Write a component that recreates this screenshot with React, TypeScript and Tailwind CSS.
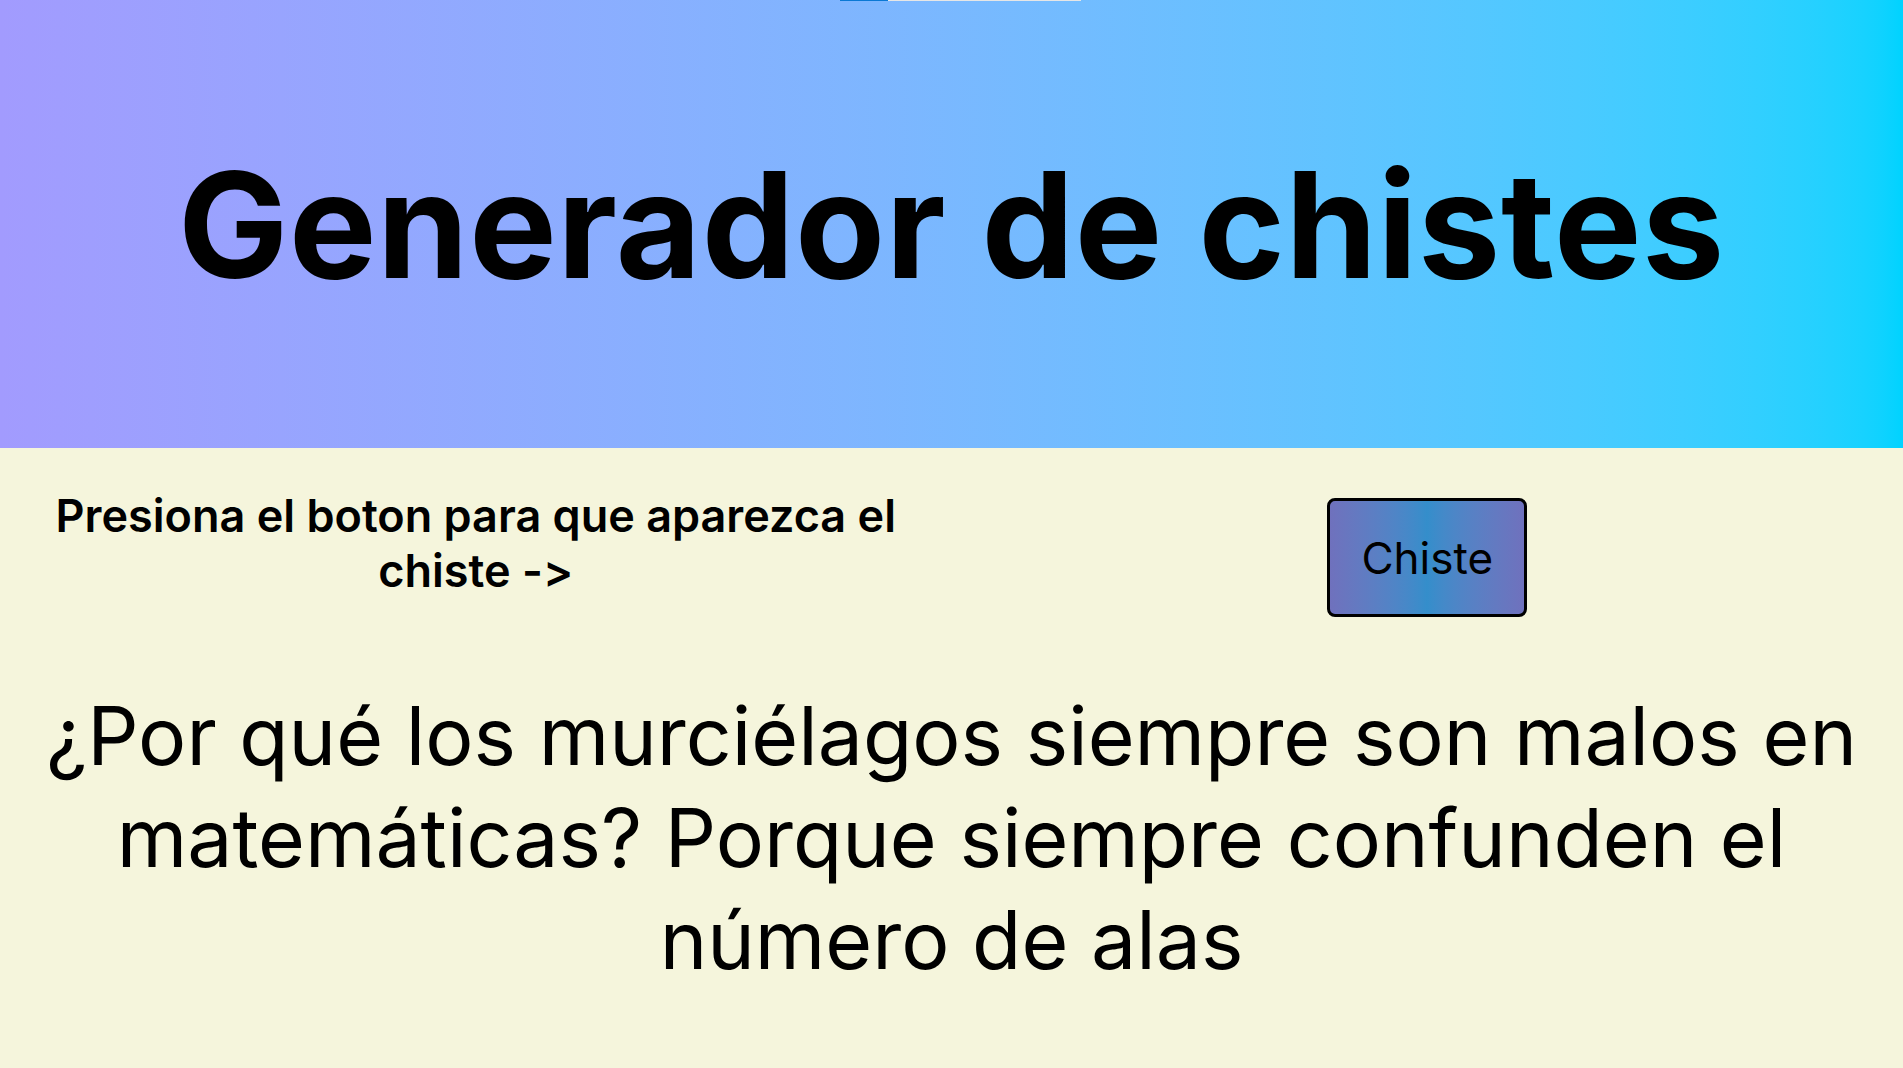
import { useState } from "react";

const JOKE =
  "¿Por qué los murciélagos siempre son malos en matemáticas? Porque siempre confunden el número de alas";

export default function App() {
  const [joke, setJoke] = useState<string>(JOKE);

  return (
    <div className="relative min-h-screen w-full bg-[#f5f5dc] text-black font-['Inter',_'Liberation_Sans',_sans-serif] [font-feature-settings:'calt'_0]">
      {/* thin loading strip at the very top */}
      <div className="absolute left-[840px] top-0 flex h-px w-[241px]">
        <div className="h-full w-[48px] bg-[#0a78d4]" />
        <div className="h-full flex-1 bg-[#e6e6e6]" />
      </div>

      <header className="flex h-[448px] w-full items-center justify-center bg-gradient-to-r from-[#a29bfe] to-[#00d3ff]">
        <h1 className="text-[147px] font-bold leading-none tracking-[0.004em]">
          Generador de chistes
        </h1>
      </header>

      <main className="flex flex-col items-center">
        <div className="grid w-full grid-cols-2 pt-[40px]">
          <p className="px-8 text-center text-[45px] font-semibold leading-[55px]">
            Presiona el boton para que aparezca el chiste -&gt;
          </p>
          <div className="flex justify-center pt-[10px]">
            <button
              onClick={() => setJoke(JOKE)}
              className="h-[119px] w-[200px] rounded-lg border-[3px] border-black bg-gradient-to-r from-[#6f71bd] via-[#348ecb] to-[#6f71bd] text-[44px] font-normal"
            >
              Chiste
            </button>
          </div>
        </div>

        <p className="mt-[68px] px-[20px] text-center text-[80.5px] font-normal leading-[102px]">
          {joke}
        </p>
      </main>
    </div>
  );
}
